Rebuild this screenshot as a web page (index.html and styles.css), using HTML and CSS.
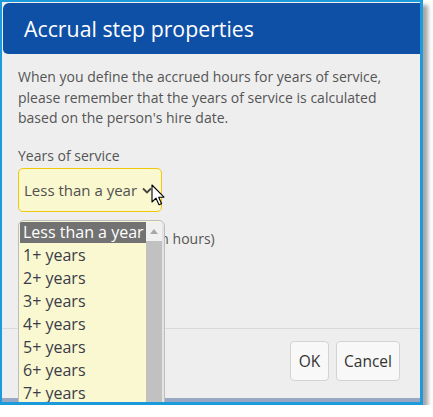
FILE: index.html
```html
<!DOCTYPE html>
<html lang="en">
<head>
    <meta charset="UTF-8">
    <title>Accrual step properties</title>
    <link rel="stylesheet" href="styles.css">
</head>
<body>
    <div class="window">
        <div class="header">Accrual step properties</div>

        <div class="content">
            <p class="intro">When you define the accrued hours for years of service, please remember that the years of service is calculated based on the person's hire date.</p>

            <label class="field-label">Years of service</label>
            <div class="select">
                <span>Less than a year</span>
                <svg class="chevron" width="10" height="7" viewBox="0 0 10 7">
                    <path d="M1 1.5L5 5.5L9 1.5" stroke="#444" stroke-width="1.8" fill="none"/>
                </svg>
            </div>

            <label class="field-label second">Accrued time values (in hours)</label>
        </div>

        <div class="footer">
            <button class="btn ok">OK</button>
            <button class="btn cancel">Cancel</button>
        </div>
        <div class="bottom-band"></div>

        <!-- open dropdown list -->
        <div class="dropdown">
            <ul class="options">
                <li class="selected">Less than a year</li>
                <li>1+ years</li>
                <li>2+ years</li>
                <li>3+ years</li>
                <li>4+ years</li>
                <li>5+ years</li>
                <li>6+ years</li>
                <li>7+ years</li>
            </ul>
            <div class="scrollbar">
                <div class="arrow"></div>
                <div class="thumb"></div>
            </div>
        </div>

        <svg class="cursor" width="15" height="23" viewBox="0 0 15 23">
            <path d="M1 1L1 18L5 14.2L8 20.8L10.6 19.7L7.7 13.2L13 13.1Z" fill="#fff" stroke="#000" stroke-width="1.1" stroke-linejoin="round"/>
        </svg>
    </div>
</body>
</html>
```

FILE: styles.css
```css
body {
    margin: 0;
    background: #fff;
    font-family: "Open Sans", "Noto Sans", sans-serif;
}

.window {
    position: relative;
    width: 418px;
    height: 400px;
    border: solid #1b9bdb;
    border-width: 2px 3px 3px 2px;
    background: #eeeeee;
    overflow: hidden;
    box-shadow: 5px 5px 4px rgba(0, 0, 0, 0.35);
    display: flex;
    flex-direction: column;
}

.header {
    margin: 1px 0 0 1px;
    height: 51px;
    line-height: 51px;
    padding-left: 21px;
    background: #0f50a7;
    border-radius: 6px 0 0 5px;
    color: #fff;
    font-size: 21.3px;
}

.content {
    flex: 1;
    padding: 0 16px;
}

.intro {
    margin: 13px 0 0;
    font-size: 14px;
    line-height: 20.5px;
    color: #555;
}

.field-label {
    display: block;
    margin-top: 17px;
    font-size: 14px;
    line-height: 20px;
    color: #555;
}

.field-label.second {
    margin-top: 17px;
}

.select {
    margin-top: 2px;
    width: 137px;
    height: 42px;
    border: 1px solid #f1c70c;
    border-radius: 5px;
    background: #faf8cf;
    display: flex;
    align-items: center;
    padding-left: 5px;
    font-size: 15px;
    color: #505050;
}

.chevron {
    margin-left: 5px;
    margin-top: 1px;
}

.footer {
    height: 70px;
    border-top: 1px solid #d9d9d9;
    display: flex;
    justify-content: flex-end;
    gap: 7px;
    padding: 12px 20px 0 0;
    box-sizing: border-box;
}

.btn {
    height: 40px;
    padding: 0;
    border: 1px solid #d3d3d3;
    border-radius: 4px;
    background: #f8f8f8;
    font-family: inherit;
    font-size: 15.5px;
    color: #333;
}

.btn.ok {
    width: 39px;
}

.btn.cancel {
    width: 64px;
}

.bottom-band {
    height: 4px;
    background: #98a8c2;
}

.dropdown {
    position: absolute;
    left: 16px;
    top: 218px;
    width: 145px;
    height: 200px;
    border: 1px solid #bdbdbd;
    border-radius: 6px 6px 0 0;
    background: #f9f8d1;
    display: flex;
    overflow: hidden;
}

.options {
    list-style: none;
    margin: 1px 0 0;
    padding: 0;
    width: 127px;
    font-size: 16px;
    line-height: 23px;
    color: #3b3b4a;
}

.options li {
    padding-left: 4px;
    white-space: nowrap;
}

.options li.selected {
    margin-left: 1px;
    padding-left: 3px;
    height: 21px;
    line-height: 21px;
    margin-bottom: 1px;
    background: #727272;
    color: #fff;
    overflow: hidden;
}

.scrollbar {
    width: 16px;
    margin-top: 1px;
    border-right: 2px solid #e3e3e3;
    display: flex;
    flex-direction: column;
}

.arrow {
    height: 19px;
    background: #f0f0f0;
    position: relative;
}

.arrow::after {
    content: "";
    position: absolute;
    left: 4px;
    top: 7px;
    border-left: 4px solid transparent;
    border-right: 4px solid transparent;
    border-bottom: 5px solid #a8a8a8;
}

.thumb {
    flex: 1;
    background: #c1c1c1;
}

.cursor {
    position: absolute;
    left: 149px;
    top: 182px;
}
```
